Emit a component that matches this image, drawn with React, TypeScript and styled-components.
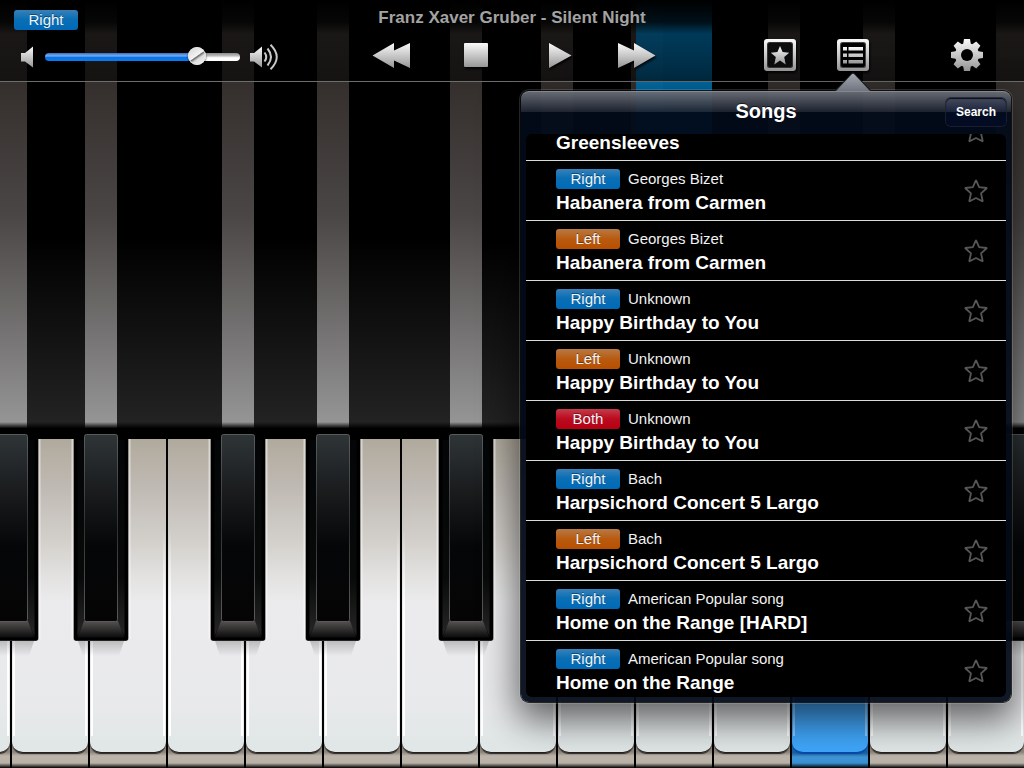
import React, { useState } from "react";
import styled, { createGlobalStyle } from "styled-components";

const GlobalStyle = createGlobalStyle`
  *, *::before, *::after { box-sizing: border-box; }
  body {
    margin: 0;
    background: #000;
    font-family: "Liberation Sans", Arial, Helvetica, sans-serif;
    color: #fff;
  }
  button { font: inherit; color: inherit; border: 0; padding: 0; background: none; cursor: pointer; }
  svg { display: block; }
`;

/* ---------- shared measures ---------- */

const OCTAVES = 6;
const WHITE_KEYS = Array.from({ length: OCTAVES * 7 }, (_, i) => i);
/* distance from each black key to the next one, repeated every octave */
const BLACK_GAPS = [36, 83, 41, 79, 37];
const BLACK_KEYS = Array.from({ length: OCTAVES * 5 }, (_, i) => BLACK_GAPS[i % 5]);
const FALLING_NOTE = 9;
const PRESSED_KEY = 11;

type Hand = "Right" | "Left" | "Both";

const HAND_FILL: Record<Hand, string> = {
  Right: "linear-gradient(#3a80b8 0, #0a6fb4 45%, #0069b8 100%)",
  Left: "linear-gradient(#b87a45 0, #b85a10 50%, #b94f00 100%)",
  Both: "linear-gradient(#c43c4a 0, #bb0a1e 50%, #b80012 100%)",
};

/* ---------- page ---------- */

const Screen = styled.main`
  position: relative;
  display: grid;
  grid-template-columns: minmax(0, 1fr);
  grid-template-rows: 82px minmax(340px, 1fr) 338px;
  min-height: 100vh;
  overflow: hidden;
`;

/* ---------- falling-note lanes ---------- */

const Lanes = styled.div`
  grid-area: 1 / 1 / 3 / 2;
  display: grid;
  overflow: hidden;
  background: linear-gradient(#000 0, #000 55%, #242424 100%);
  &::after {
    content: "";
    grid-area: 1 / 1;
    align-self: end;
    height: 8px;
    background: linear-gradient(rgba(0, 0, 0, 0), #000 80%);
  }
`;

const BlackTrack = styled.div`
  grid-area: 1 / 1;
  display: flex;
  min-width: 0;
  margin-left: -16px;
  pointer-events: none;
`;

const BlackSlot = styled.div<{ $gap: number }>`
  flex: 0 0 54px;
  min-width: 0;
  margin-right: ${(p) => p.$gap}px;
  display: flex;
  justify-content: center;
`;

const Stripe = styled.div`
  width: 32px;
  background: linear-gradient(#2b2725 0, #35302e 20%, #4a4645 50%, #989898 100%);
`;

const WhiteTrack = styled.div`
  grid-area: 1 / 1;
  display: flex;
  min-width: 0;
  gap: 2px;
  margin-left: -66px;
`;

const Lane = styled.div<{ $lit: boolean }>`
  flex: 0 0 76px;
  background: ${(p) => (p.$lit ? "rgba(0, 116, 180, 0.9)" : "transparent")};
`;

/* ---------- keyboard ---------- */

const Keyboard = styled.section`
  grid-area: 3 / 1;
  display: grid;
  padding-top: 9px;
  overflow: hidden;
  background: #000;
`;

const WhiteKey = styled.button<{ $pressed: boolean }>`
  flex: 0 0 76px;
  display: flex;
  align-items: flex-start;
  background: ${(p) =>
    p.$pressed
      ? "linear-gradient(#1d5f9e 0, #1d5f9e 314px, #3f95d6 318px, #3a90d0 324px, #000 329px)"
      : "linear-gradient(#8e857a 0, #8e857a 313px, #bdb5ab 317px, #b9b2a7 324px, #000 329px)"};
`;

const WhiteFace = styled.span<{ $pressed: boolean }>`
  display: flex;
  justify-content: space-between;
  width: 100%;
  height: 314px;
  padding: 0 1px;
  border-radius: 0 0 11px 11px;
  border-bottom: 1px solid ${(p) => (p.$pressed ? "#0848a8" : "#222")};
  box-shadow: 0 1px 1px ${(p) => (p.$pressed ? "#0848a8" : "#2a2622")};
  background: ${(p) =>
    p.$pressed
      ? "linear-gradient(#2a7fc0 0, #43a8fb 85%, #3fa6fa 100%)"
      : "linear-gradient(#b0aa9d 0, #bfb9b3 15%, #d2cfca 32%, #e3e2e1 44%, #ebebed 52%, #e8e9eb 85%, #e1e7e7 97%, #e1e7e7 100%)"};
  &::before,
  &::after {
    content: "";
    width: 2px;
    height: 297px;
    background: linear-gradient(
      rgba(255, 255, 255, 0) 30%,
      rgba(255, 255, 255, ${(p) => (p.$pressed ? 0.4 : 1)}) 60%
    );
  }
`;

const BlackKey = styled.button`
  flex: 0 0 60px;
  height: 222px;
  margin-top: -5px;
  pointer-events: auto;
`;

const KeyDefs = () => (
  <svg width="0" height="0" aria-hidden="true" style={{ position: "absolute" }}>
    <defs>
      <linearGradient id="metal" x1="0" y1="0" x2="0" y2="1">
        <stop offset="0" stopColor="#fafafa" />
        <stop offset="1" stopColor="#979797" />
      </linearGradient>
      <linearGradient id="cap" x1="0" y1="0" x2="0" y2="1">
        <stop offset="0" stopColor="#2f3537" />
        <stop offset="0.3" stopColor="#1a1c1e" />
        <stop offset="0.6" stopColor="#050608" />
        <stop offset="1" stopColor="#050505" />
      </linearGradient>
      <linearGradient id="capEdge" x1="0" y1="0" x2="0" y2="1">
        <stop offset="0" stopColor="#5a5c5d" />
        <stop offset="0.5" stopColor="#303132" />
        <stop offset="1" stopColor="#5c5a5a" />
      </linearGradient>
      <linearGradient id="side" x1="0" y1="0" x2="0" y2="1">
        <stop offset="0" stopColor="#040506" />
        <stop offset="0.7" stopColor="#080909" />
        <stop offset="1" stopColor="#262626" />
      </linearGradient>
      <linearGradient id="lip" x1="0" y1="0" x2="0" y2="1">
        <stop offset="0" stopColor="#565252" />
        <stop offset="1" stopColor="#0c0c0c" />
      </linearGradient>
      <linearGradient id="cast" x1="0" y1="0" x2="0" y2="1">
        <stop offset="0" stopColor="#000" stopOpacity="0.2" />
        <stop offset="1" stopColor="#000" stopOpacity="0" />
      </linearGradient>
    </defs>
  </svg>
);

const BlackKeyArt = () => (
  <svg width="60" height="222" viewBox="0 0 60 222" aria-hidden="true">
    <path d="M7 207H53L48 222H12Z" fill="url(#cast)" />
    <path d="M0.500 5H59.500V205H0.500Z" fill="#fff" fillOpacity="0.5" />
    <path d="M2.500 5H57.500V204Q57.500 207 54.500 207H5.500Q2.500 207 2.500 204Z" fill="#4a4744" />
    <path d="M3 0H57V204Q57 206.500 54.500 206.500H5.500Q3 206.500 3 204Z" fill="#000" />
    <path d="M6.500 6H13V188L6.500 202Z" fill="url(#side)" />
    <path d="M53.500 6H47V188L53.500 202Z" fill="url(#side)" />
    <path d="M13 187H47L53.500 203.500H6.500Z" fill="url(#lip)" />
    <rect x="13.500" y="0.500" width="33" height="187" rx="2" fill="url(#cap)" stroke="url(#capEdge)" />
  </svg>
);

/* ---------- toolbar ---------- */

const Toolbar = styled.header`
  grid-area: 1 / 1;
  position: relative;
  display: grid;
  grid-template-columns: 1fr auto 1fr;
  border-bottom: 1px solid #6d6d6d;
  background: linear-gradient(
    #000 0,
    rgba(0, 0, 0, 0.85) 22px,
    rgba(0, 0, 0, 0.45) 34px,
    rgba(0, 0, 0, 0.6) 81px
  );
`;

const HandBadge = styled.span<{ $hand: Hand }>`
  display: block;
  width: 64px;
  height: 20px;
  border-radius: 3px;
  background: ${(p) => HAND_FILL[p.$hand]};
  font-size: 15px;
  line-height: 20px;
  text-align: center;
  text-shadow: 0 -1px 0 rgba(0, 0, 0, 0.4);
  color: #f0f4f8;
`;

const LevelArea = styled.div`
  display: flex;
  flex-direction: column;
  align-items: flex-start;
  gap: 13px;
  padding: 10px 0 0 14px;
`;

const VolumeRow = styled.label`
  display: flex;
  align-items: center;
  gap: 10px;
  height: 28px;
  padding-left: 7px;
`;

const VolumeSlider = styled.input`
  appearance: none;
  width: 195px;
  height: 20px;
  margin: 0;
  background: none;
  &::-webkit-slider-runnable-track {
    height: 8px;
    border-radius: 4px;
    background:
      linear-gradient(#3a6cb8 0, #6ea6ef 30%, #4a90ec 48%, #0a74e4 52%, #0a7cf0 100%) 0 0 /
        var(--level) 100% no-repeat,
      linear-gradient(#8c8c8c 0, #bdbdbd 35%, #fff 60%, #fff 100%);
  }
  &::-webkit-slider-thumb {
    appearance: none;
    width: 18px;
    height: 18px;
    margin-top: -6px;
    border-radius: 50%;
    background: linear-gradient(145deg, #d0d0d0 0, #f4f4f4 48%, #6c6c6c 52%, #dcdcdc 62%, #fff 100%);
    box-shadow: inset 0 0 1px 1px #e4e4e4, 0 1px 2px rgba(0, 0, 0, 0.8);
  }
`;

const PlayerArea = styled.div`
  display: flex;
  flex-direction: column;
  align-items: center;
  gap: 13px;
  padding-top: 8px;
`;

const NowPlaying = styled.h1`
  margin: 0;
  font-size: 17px;
  line-height: 20px;
  font-weight: 700;
  color: #a3a3a3;
  white-space: nowrap;
`;

const Transport = styled.div`
  display: flex;
  gap: 40px;
  padding-left: 4px;
`;

const GlyphButton = styled.button<{ $width: number }>`
  display: flex;
  justify-content: center;
  width: ${(p) => p.$width}px;
  height: 28px;
  filter: drop-shadow(1px 2px 1px rgba(0, 0, 0, 0.8));
`;

const ToolArea = styled.nav`
  display: flex;
  justify-content: flex-end;
  align-items: flex-start;
  gap: 41px;
  padding: 39px 41px 0 0;
`;

const ToolButton = styled.button<{ $apart?: boolean }>`
  width: 32px;
  height: 32px;
  margin-left: ${(p) => (p.$apart ? 41 : 0)}px;
  filter: drop-shadow(1px 2px 1px rgba(0, 0, 0, 0.8));
`;

const QuietIcon = () => (
  <svg width="14" height="22" viewBox="0 0 14 22" aria-hidden="true">
    <path d="M0 7H4L12 0.500V21.500L4 15.500H0Z" fill="url(#metal)" />
  </svg>
);

const LoudIcon = () => (
  <svg width="30" height="26" viewBox="0 0 30 26" aria-hidden="true">
    <path d="M0 9H4L12 2.500V23.500L4 17.500H0Z" fill="url(#metal)" />
    <g fill="none" stroke="#c9c9c9" strokeWidth="2">
      <path d="M14.500 8.500Q18 13 14.500 17.500" />
      <path d="M17.500 4.500Q24.500 13 17.500 21.500" />
      <path d="M20.500 0.800Q33 13 20.500 25.200" />
    </g>
  </svg>
);

const GearIcon = () => (
  <svg width="32" height="32" viewBox="0 0 32 32" aria-hidden="true">
    <mask id="gear">
      <circle cx="16" cy="16" r="12" fill="#fff" />
      {[0, 45, 90, 135].map((a) => (
        <path key={a} d="M13 0H19L20 6V26L19 32H13L12 26V6Z" fill="#fff" transform={`rotate(${a} 16 16)`} />
      ))}
      <circle cx="16" cy="16" r="6" fill="#000" />
    </mask>
    <rect width="32" height="32" fill="url(#metal)" mask="url(#gear)" />
  </svg>
);

const StarBoxIcon = () => (
  <svg width="32" height="32" viewBox="0 0 32 32" aria-hidden="true">
    <rect width="32" height="32" rx="3" fill="url(#metal)" />
    <rect x="3" y="3" width="26" height="26" rx="2.500" fill="#333" />
    <rect x="4" y="4" width="24" height="24" rx="2" fill="#0c0c0c" />
    <path
      d="M16 7L18.600 13.100L25.200 13.700L20.200 18.100L21.700 25.600L16 21.600L10.300 25.600L11.800 18.100L6.800 13.700L13.400 13.100Z"
      fill="url(#metal)"
    />
  </svg>
);

const ListBoxIcon = () => (
  <svg width="32" height="32" viewBox="0 0 32 32" aria-hidden="true">
    <rect width="32" height="32" rx="3" fill="url(#metal)" />
    <rect x="3" y="3" width="26" height="26" rx="2.500" fill="#444" />
    <rect x="4" y="4" width="24" height="24" rx="2" fill="#000" />
    <path
      d="M6 8h4v3.500H6zM11.500 8H26v3.500H11.500zM6 14.500h4v3.500H6zM11.500 14.500H26v3.500H11.500zM6 21h4v3.500H6zM11.500 21H26v3.500H11.500z"
      fill="url(#metal)"
    />
  </svg>
);

/* ---------- songs popover ---------- */

const Popover = styled.aside`
  position: absolute;
  top: 91px;
  right: 13px;
  width: 490px;
  max-width: calc(100vw - 26px);
  padding: 0 5px 5px;
  border-radius: 8px;
  background:
    linear-gradient(rgba(255, 255, 255, 0.4) 0, rgba(255, 255, 255, 0.1) 100%) 0 0 / 100% 21px
      no-repeat,
    rgba(2, 10, 24, 0.94);
  box-shadow:
    inset 0 1px 0 rgba(255, 255, 255, 0.2),
    0 0 0 1px rgba(0, 0, 0, 0.75),
    0 0 0 2px rgba(255, 255, 255, 0.14),
    0 14px 36px 4px rgba(0, 0, 0, 0.6);
`;

const Pointer = styled.svg`
  position: absolute;
  top: -19px;
  right: 139px;
`;

const PopoverHeader = styled.div`
  display: grid;
  grid-template-columns: 1fr auto 1fr;
  align-items: start;
  height: 43px;
`;

const PopoverTitle = styled.h2`
  grid-column: 2;
  margin: 0;
  font-size: 20px;
  line-height: 40px;
  font-weight: 700;
  text-shadow: 0 -1px 0 rgba(0, 0, 0, 0.6);
`;

const SearchButton = styled.button`
  justify-self: end;
  width: 60px;
  height: 28px;
  margin-top: 7px;
  border-radius: 5px;
  background: linear-gradient(#454c60 0, #1c2238 50%, #020a20 52%, #030c24 100%);
  box-shadow: inset 0 1px 1px #0a0d16, 0 0 0 1px rgba(30, 36, 52, 0.8);
  font-size: 12px;
  font-weight: 700;
`;

const ListFrame = styled.div`
  height: 563px;
  overflow: hidden;
  border-radius: 6px;
  background: #000;
`;

/* the list is scrolled a little more than half a row */
const SongList = styled.ul`
  list-style: none;
  margin: -33px 0 0;
  padding: 0;
`;

const SongRow = styled.li`
  display: grid;
  grid-template-columns: 1fr 60px;
  align-items: center;
  height: 60px;
  padding-left: 30px;
  border-bottom: 1px solid #d9dcd9;
`;

const SongText = styled.div`
  display: flex;
  flex-direction: column;
  justify-content: flex-end;
  gap: 2px;
  height: 48px;
  min-width: 0;
`;

const SongMeta = styled.div`
  display: flex;
  gap: 8px;
  font-size: 15px;
  line-height: 20px;
  color: #f2f2f2;
`;

const SongName = styled.div`
  font-size: 19px;
  line-height: 24px;
  font-weight: 700;
  white-space: nowrap;
`;

const FavoriteButton = styled.button`
  width: 26px;
  height: 26px;
  justify-self: center;
`;

const StarOutline = () => (
  <svg width="26" height="26" viewBox="0 0 26 26" aria-hidden="true">
    <path
      d="M13 2L16.100 9.200L24 10L18 15.300L19.800 23.500L13 20L6.200 23.500L8 15.300L2 10L9.900 9.200Z"
      fill="none"
      stroke="#565656"
      strokeWidth="1.800"
      strokeLinejoin="bevel"
    />
  </svg>
);

type Song = { name: string; artist?: string; hand?: Hand };

const SONGS: Song[] = [
  { name: "Greensleeves" },
  { name: "Habanera from Carmen", artist: "Georges Bizet", hand: "Right" },
  { name: "Habanera from Carmen", artist: "Georges Bizet", hand: "Left" },
  { name: "Happy Birthday to You", artist: "Unknown", hand: "Right" },
  { name: "Happy Birthday to You", artist: "Unknown", hand: "Left" },
  { name: "Happy Birthday to You", artist: "Unknown", hand: "Both" },
  { name: "Harpsichord Concert 5 Largo", artist: "Bach", hand: "Right" },
  { name: "Harpsichord Concert 5 Largo", artist: "Bach", hand: "Left" },
  { name: "Home on the Range [HARD]", artist: "American Popular song", hand: "Right" },
  { name: "Home on the Range", artist: "American Popular song", hand: "Right" },
];

export default function App() {
  const [volume, setVolume] = useState(81);

  return (
    <Screen>
      <GlobalStyle />
      <KeyDefs />

      <Lanes>
        <BlackTrack>
          {BLACK_KEYS.map((gap, i) => (
            <BlackSlot key={i} $gap={gap}>
              <Stripe />
            </BlackSlot>
          ))}
        </BlackTrack>
        <WhiteTrack>
          {WHITE_KEYS.map((i) => (
            <Lane key={i} $lit={i === FALLING_NOTE} />
          ))}
        </WhiteTrack>
      </Lanes>

      <Toolbar>
        <LevelArea>
          <HandBadge $hand="Right">Right</HandBadge>
          <VolumeRow>
            <QuietIcon />
            <VolumeSlider
              type="range"
              min={0}
              max={100}
              value={volume}
              aria-label="Volume"
              onChange={(e) => setVolume(Number(e.target.value))}
              style={{ "--level": `${volume}%` } as React.CSSProperties}
            />
            <LoudIcon />
          </VolumeRow>
        </LevelArea>

        <PlayerArea>
          <NowPlaying>Franz Xaver Gruber - Silent Night</NowPlaying>
          <Transport>
            <GlyphButton $width={38} aria-label="Rewind">
              <svg width="38" height="28" viewBox="0 0 38 28">
                <path d="M0.500 14.500L22 2V9.500L38 2V27L22 19.500V27Z" fill="url(#metal)" />
              </svg>
            </GlyphButton>
            <GlyphButton $width={52} aria-label="Stop">
              <svg width="24" height="28" viewBox="0 0 24 28">
                <rect y="2" width="24" height="24" rx="1" fill="url(#metal)" />
              </svg>
            </GlyphButton>
            <GlyphButton $width={36} aria-label="Play">
              <svg width="24" height="28" viewBox="0 0 24 28">
                <path d="M1 2L23.500 14.500L1 27Z" fill="url(#metal)" />
              </svg>
            </GlyphButton>
            <GlyphButton $width={38} aria-label="Fast forward">
              <svg width="38" height="28" viewBox="0 0 38 28">
                <path d="M37.500 14.500L16 2V9.500L0 2V27L16 19.500V27Z" fill="url(#metal)" />
              </svg>
            </GlyphButton>
          </Transport>
        </PlayerArea>

        <ToolArea>
          <ToolButton aria-label="Favorites">
            <StarBoxIcon />
          </ToolButton>
          <ToolButton aria-label="Songs">
            <ListBoxIcon />
          </ToolButton>
          <ToolButton $apart aria-label="Settings">
            <GearIcon />
          </ToolButton>
        </ToolArea>
      </Toolbar>

      <Keyboard aria-label="Piano keyboard">
        <WhiteTrack>
          {WHITE_KEYS.map((i) => (
            <WhiteKey key={i} $pressed={i === PRESSED_KEY} aria-label={`White key ${i + 1}`}>
              <WhiteFace $pressed={i === PRESSED_KEY} />
            </WhiteKey>
          ))}
        </WhiteTrack>
        <BlackTrack>
          {BLACK_KEYS.map((gap, i) => (
            <BlackSlot key={i} $gap={gap}>
              <BlackKey aria-label={`Black key ${i + 1}`}>
                <BlackKeyArt />
              </BlackKey>
            </BlackSlot>
          ))}
        </BlackTrack>
      </Keyboard>

      <Popover>
        <Pointer width="38" height="19" viewBox="0 0 38 19" aria-hidden="true">
          <defs>
            <linearGradient id="pointer" x1="0" y1="0" x2="0" y2="1">
              <stop offset="0" stopColor="#a4a8b0" />
              <stop offset="1" stopColor="#6f747f" />
            </linearGradient>
          </defs>
          <path d="M0 19L19 0L38 19Z" fill="#1a1a1c" />
          <path d="M2 19L17.500 2.500Q19 0.800 20.500 2.500L36 19Z" fill="url(#pointer)" />
        </Pointer>
        <PopoverHeader>
          <PopoverTitle>Songs</PopoverTitle>
          <SearchButton>Search</SearchButton>
        </PopoverHeader>
        <ListFrame>
          <SongList>
            {SONGS.map((song, i) => (
              <SongRow key={i}>
                <SongText>
                  {song.hand && (
                    <SongMeta>
                      <HandBadge $hand={song.hand}>{song.hand}</HandBadge>
                      <span>{song.artist}</span>
                    </SongMeta>
                  )}
                  <SongName>{song.name}</SongName>
                </SongText>
                <FavoriteButton aria-label={`Add ${song.name} to favorites`}>
                  <StarOutline />
                </FavoriteButton>
              </SongRow>
            ))}
          </SongList>
        </ListFrame>
      </Popover>
    </Screen>
  );
}
